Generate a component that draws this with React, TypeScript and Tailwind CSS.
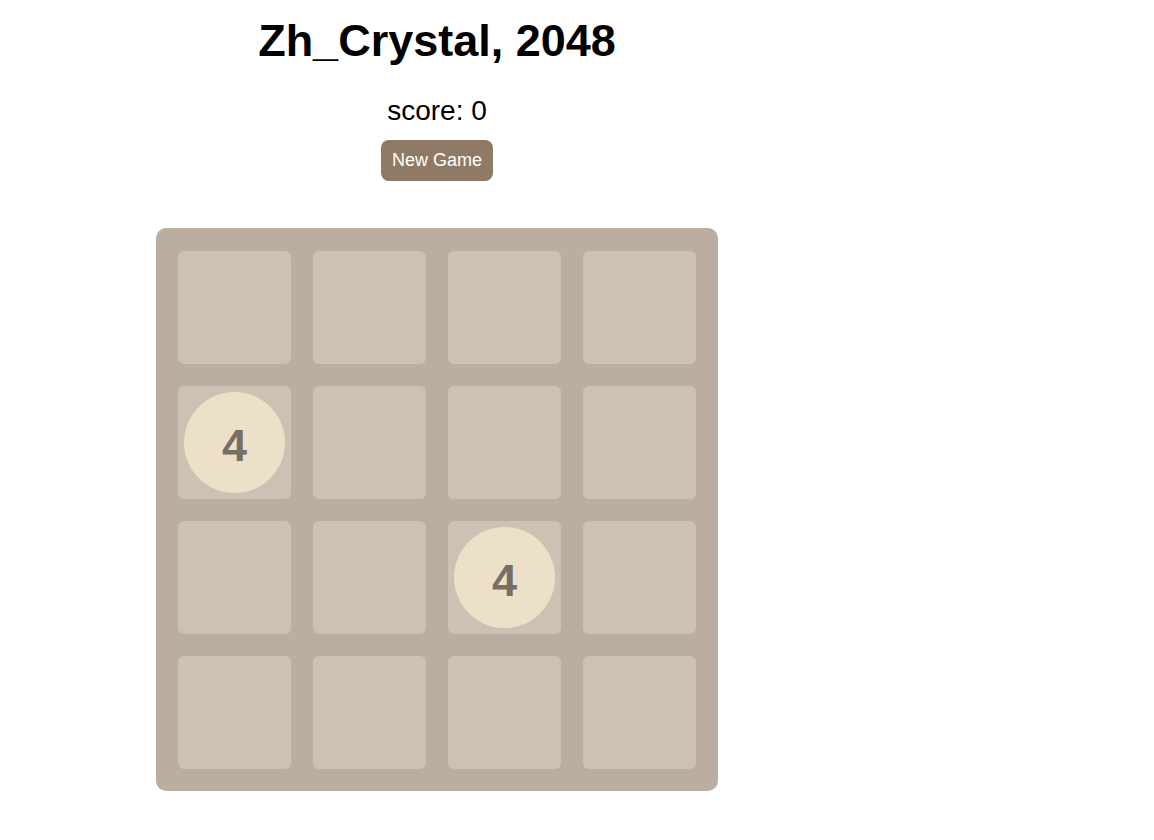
const board = [
  [0, 0, 0, 0],
  [4, 0, 0, 0],
  [0, 0, 4, 0],
  [0, 0, 0, 0],
];

export default function App() {
  return (
    <div className="min-h-screen bg-white font-['Liberation_Sans',Arial,sans-serif]">
      <div className="ml-[156px] flex w-[562px] flex-col items-center pt-[12px]">
        <h1 className="text-[45px] font-bold leading-[58px] text-black">Zh_Crystal, 2048</h1>
        <p className="mt-[25px] text-[28px] leading-[32px] text-black">score: 0</p>
        <button className="mt-[13px] h-[41px] w-[112px] rounded-[8px] bg-[#8f7a66] text-[18px] text-white">
          New Game
        </button>
        <div className="mt-[47px] grid grid-cols-4 gap-[22px] rounded-[10px] bg-[#bbada0] px-[22px] pb-[22px] pt-[23px]">
          {board.flat().map((v, i) => (
            <div
              key={i}
              className="flex h-[113px] w-[113px] items-center justify-center rounded-[6px] bg-[#cdc1b4]"
            >
              {v > 0 && (
                <div className="flex h-[101px] w-[101px] items-center justify-center rounded-full bg-[#ede0c8] pt-[6px] text-[45px] font-bold text-[#776e65]">
                  {v}
                </div>
              )}
            </div>
          ))}
        </div>
      </div>
    </div>
  );
}
